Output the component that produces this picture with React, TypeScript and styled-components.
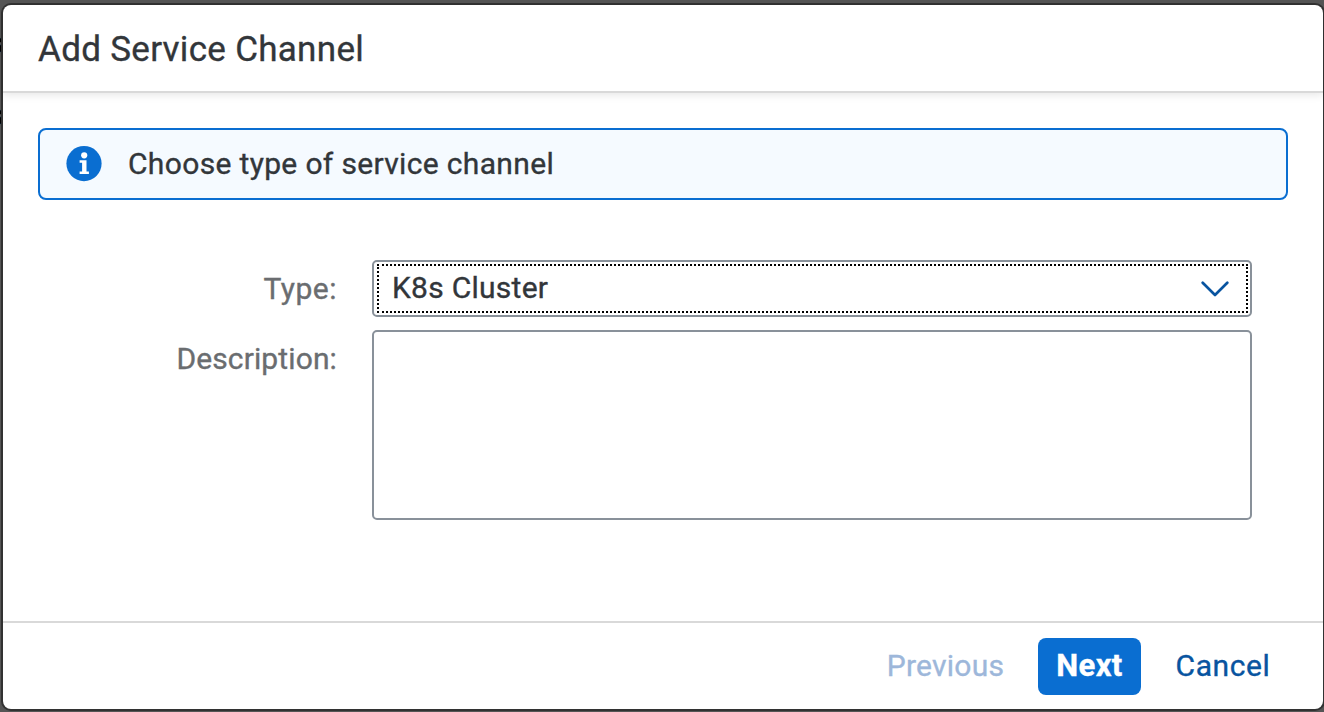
import React from "react";
import styled, { createGlobalStyle } from "styled-components";

const GlobalStyle = createGlobalStyle`
  * { box-sizing: border-box; }
  body { margin: 0; overflow: hidden; }
`;

const Page = styled.div`
  position: relative;
  width: 1324px;
  height: 712px;
  padding: 5px 1px 3px 3px;
  overflow: hidden;
  background: #555;
  font-family: Roboto, "Liberation Sans", sans-serif;
  font-size: 30px;
  color: #32363a;
  -webkit-text-stroke: 0.35px currentColor;
`;

const CoveredText = styled.span<{ $top: number }>`
  position: absolute;
  top: ${(p) => p.$top}px;
  left: -12px;
  font-size: 30px;
  line-height: 30px;
  font-weight: 700;
  color: #000;
`;

const Dialog = styled.section`
  position: relative;
  display: flex;
  flex-direction: column;
  height: 704px;
  border-radius: 8px;
  background: #fff;
  box-shadow: 0 0 0 2px #323232;
`;

const Header = styled.header`
  flex: none;
  height: 88px;
  padding: 0 35px;
  border-bottom: 2px solid #d9d9d9;
  border-radius: 8px 8px 0 0;
  box-shadow: 0 2px 8px rgba(0, 0, 0, 0.1);
`;

const Title = styled.h1`
  margin: 0;
  font-size: 35px;
  font-weight: 400;
  line-height: 89px;
  letter-spacing: 0.3px;
`;

const Content = styled.main`
  flex: 1;
  padding: 35px 35px 0;
`;

const MessageStrip = styled.div`
  display: flex;
  align-items: center;
  gap: 26px;
  height: 72px;
  padding-left: 26px;
  border: 2px solid #0a6ed1;
  border-radius: 8px;
  background: #f5faff;
`;

const Message = styled.span`
  line-height: 68px;
  letter-spacing: 0.34px;
`;

const Form = styled.div`
  display: grid;
  grid-template-columns: 299px 880px;
  column-gap: 35px;
  row-gap: 13px;
  margin-top: 60px;
`;

const Label = styled.label<{ $spacing: number }>`
  text-align: right;
  line-height: 57px;
  letter-spacing: ${(p) => p.$spacing}px;
  color: #6a6d70;
`;

const Select = styled.div`
  display: flex;
  height: 57px;
  padding: 2px 2px 2px 3px;
  border: 2px solid #89919a;
  border-radius: 5px;
`;

const SelectFocus = styled.div`
  display: flex;
  flex: 1;
  align-items: center;
  justify-content: space-between;
  padding: 0 17px 0 13px;
  border: 2px dotted #000;
`;

const SelectValue = styled.span`
  padding-bottom: 2px;
  letter-spacing: 0.27px;
`;

const TextArea = styled.div`
  height: 190px;
  border: 2px solid #89919a;
  border-radius: 5px;
`;

const Footer = styled.footer`
  display: flex;
  flex: none;
  justify-content: flex-end;
  height: 88px;
  padding: 15px 35px 0 0;
  gap: 17px;
  border-top: 2px solid #d9d9d9;
`;

const Button = styled.button<{ $width: number; $spacing: number; $kind?: "disabled" | "primary" }>`
  width: ${(p) => p.$width}px;
  height: 57px;
  padding: 0 0 2px;
  border: 0;
  border-radius: 8px;
  font: inherit;
  font-size: ${(p) => (p.$kind === "primary" ? 31 : 30)}px;
  font-weight: ${(p) => (p.$kind === "primary" ? 700 : 400)};
  letter-spacing: ${(p) => p.$spacing}px;
  color: ${(p) => (p.$kind === "primary" ? "#fff" : p.$kind === "disabled" ? "#9db7da" : "#0854a0")};
  background: ${(p) => (p.$kind === "primary" ? "#0a6ed1" : "transparent")};
`;

const InfoIcon = () => (
  <svg width="36" height="36" viewBox="0 0 36 36">
    <circle cx="18" cy="17.6" r="17.6" fill="#0a6ed1" />
    <circle cx="18.2" cy="9.3" r="3.1" fill="#fff" />
    <path d="M13.6 14.3h6.9v11.1h2.4v2.5h-9.3v-2.5h2.5v-8.6h-2.5z" fill="#fff" />
  </svg>
);

const Chevron = () => (
  <svg width="28" height="16" viewBox="0 0 28 16">
    <path d="M1.7 1.7 14 14 26.3 1.7" fill="none" stroke="#0854a0" strokeWidth="2.7" strokeLinecap="round" strokeLinejoin="round" />
  </svg>
);

export default function App() {
  return (
    <Page>
      <GlobalStyle />
      <CoveredText $top={28}>s</CoveredText>
      <CoveredText $top={100}>s</CoveredText>
      <Dialog>
        <Header>
          <Title>Add Service Channel</Title>
        </Header>
        <Content>
          <MessageStrip>
            <InfoIcon />
            <Message>Choose type of service channel</Message>
          </MessageStrip>
          <Form>
            <Label $spacing={0.5}>Type:</Label>
            <Select>
              <SelectFocus>
                <SelectValue>K8s Cluster</SelectValue>
                <Chevron />
              </SelectFocus>
            </Select>
            <Label $spacing={0.12}>Description:</Label>
            <TextArea />
          </Form>
        </Content>
        <Footer>
          <Button $width={151} $spacing={0.25} $kind="disabled">Previous</Button>
          <Button $width={103} $spacing={0.4} $kind="primary">Next</Button>
          <Button $width={130} $spacing={0.6}>Cancel</Button>
        </Footer>
      </Dialog>
    </Page>
  );
}
